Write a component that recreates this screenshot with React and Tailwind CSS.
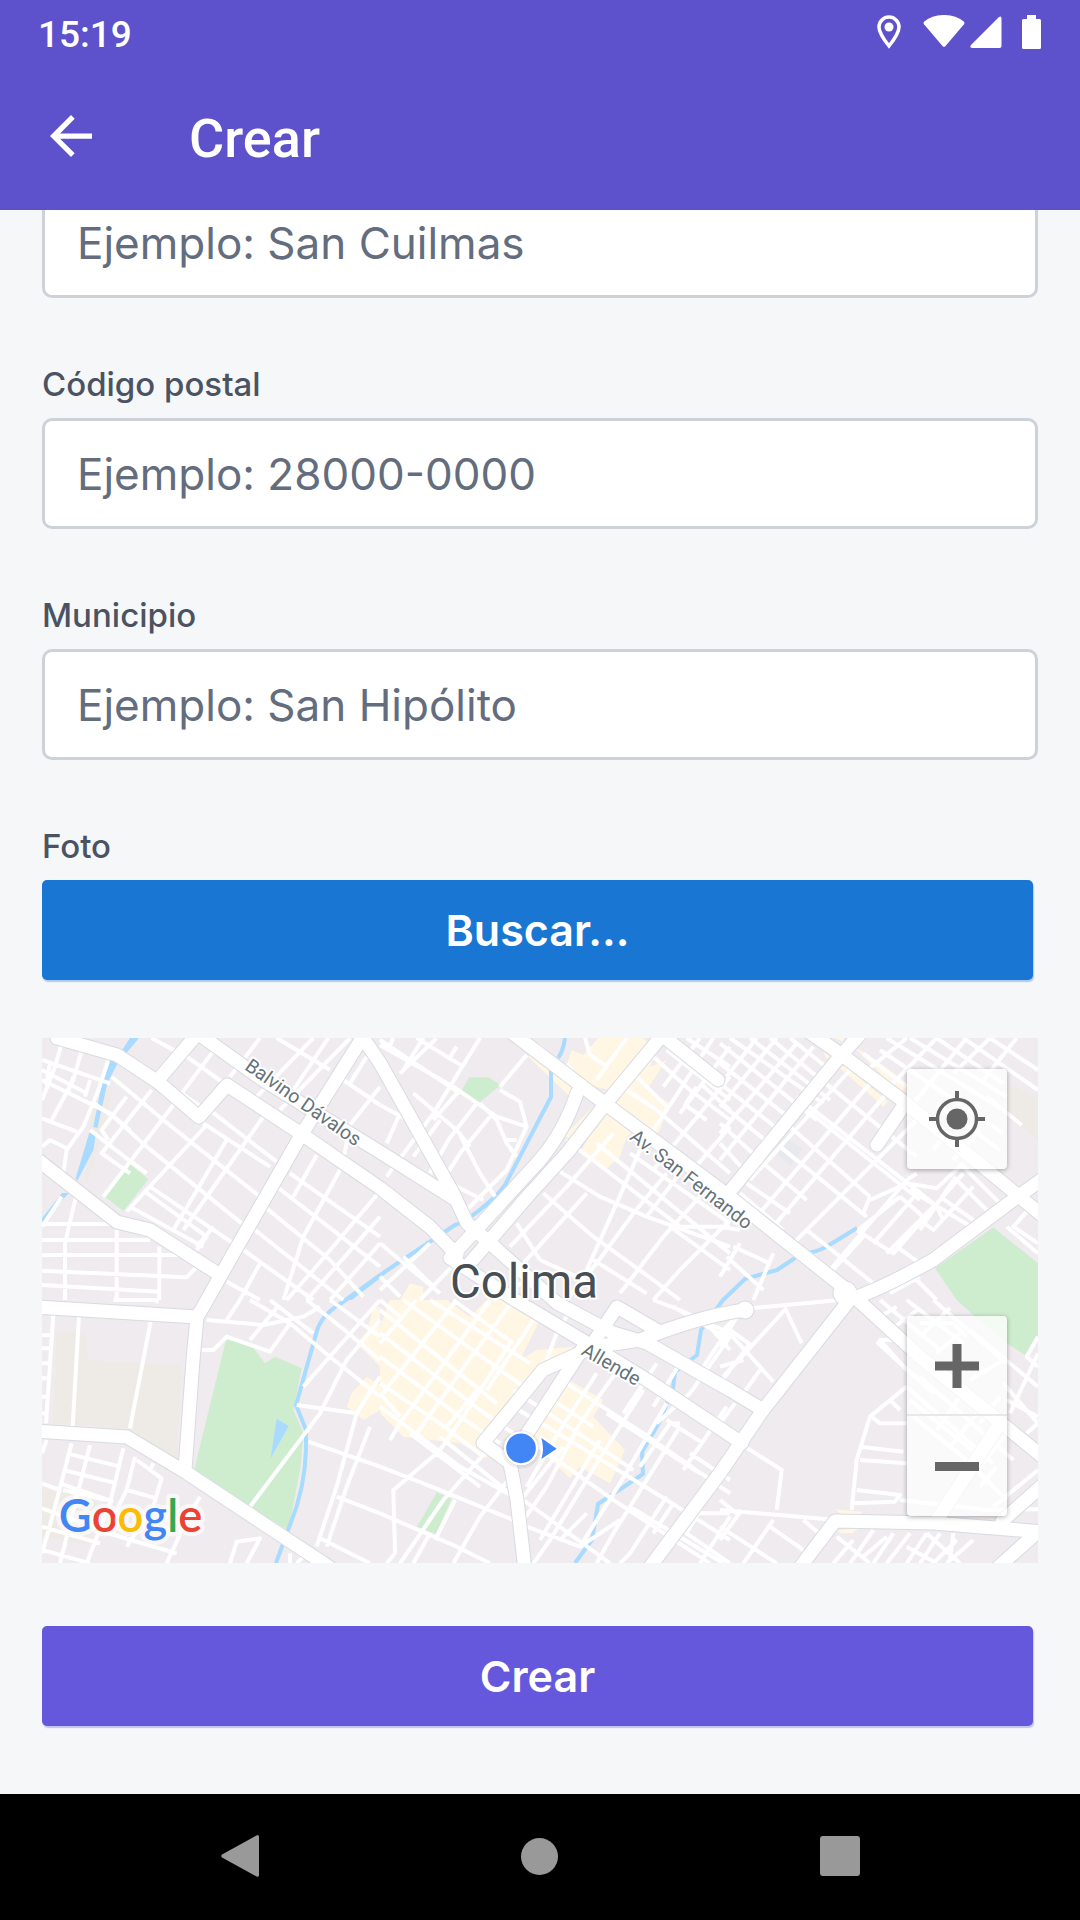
import React from "react";

const FONT = "font-[Inter,'Liberation_Sans',sans-serif]";

/* Map artwork is drawn in tiles; each tile has its own origin. */
const tiles = [
  {
    at: "translate(-36 -24)",
    blocks: "",
    sand: "M215 170L245 185L205 360L165 470L175 300Z",
    parks: "M300 403L355 448L280 543L222 498Z",
    rivers:
      "M300 24L327 24L290 68L275 62ZM240 86L268 90L232 160L202 295L190 290L218 150ZM178 308L198 310L190 360L142 452L137 445ZM95 490L118 488L72 535L36 590V565ZM940 810L1050 728V745L965 810Z",
    streets:
      "M100 24L75 110L36 210M158 50L130 150L65 270M36 90L240 160M36 150L240 250L300 300M36 120L170 190M60 100L48 165M130 140L115 185M180 150L165 200M235 90L205 180L160 290L110 360L100 430M36 265L140 305M36 350L60 330L110 355M245 140L400 270L500 350L690 500M365 24L440 65M290 200L215 300L235 330M365 180L215 370L300 430M430 225L220 500M530 285L290 545M590 330L430 600M700 260L460 600M185 215L250 260L350 350L635 580M180 300L290 385L350 430M545 245L740 395M520 280L720 410M470 80L590 165M560 50L455 190L520 235M690 24L600 140M740 24L900 120M850 24L680 200M790 180L895 24M960 24L750 240M345 485L530 620L500 660M300 530L520 650M360 470L610 640M550 590L500 650M36 582H245M36 630H360M36 675H450M36 722L470 742L510 700M36 765L385 785M140 490L105 640V810M95 500L36 590M260 600V810M388 650V810M860 375L790 500M930 420L820 620L760 810M1040 495L850 720L770 810M780 430L1050 620M740 470L1050 710M710 535L900 690L1000 800M675 600L940 810M640 660L850 810M590 755L690 810M690 700L630 810M940 150L1050 225M1050 170L960 285L940 390M1010 80L960 160M1050 560L830 810M1050 640L900 810",
  },
  {
    at: "translate(1014 -24)",
    blocks:
      "M445 80L480 40L600 150L575 205ZM575 60L610 75L655 24H790L830 60L810 110L860 90L800 180L870 220L835 310L780 290L740 320L720 380L675 420L600 370L620 330L550 320L650 220L690 180L600 160L560 105ZM90 760L130 770V810H60Z",
    sand: "",
    parks: "M268 142H325L362 165L290 224L240 188Z",
    rivers: "",
    streets:
      "M0 45L220 170L350 260L440 290M40 24L24 60M110 24L250 110M170 24L60 130M300 24L160 250L20 440M230 50L205 90M130 24L70 120M0 225L120 290M60 250L20 340M0 30L240 190M440 75L360 170M235 185L160 270M290 220L205 330L150 430M330 260L240 370L190 450M360 180L420 215L440 290L380 420L260 540M300 220L350 270L380 340L410 380M240 315L300 430L345 500M375 330H410M100 190L230 300L270 350M180 270L100 380M190 450L310 510M615 24L630 75L680 110M740 24L650 150M560 100L590 140M820 80L930 180L1050 270M860 60L1050 210M1000 24L880 210L800 330M1050 50L900 250M1050 140L820 420M960 24L850 170M920 24L1050 110M740 180L830 240L1050 430M770 140L860 230M960 160L1050 240M950 170L915 225L980 270M1050 290L930 430M750 370L1050 580M650 340L1050 670M560 330L900 590H1050M540 425L660 500L800 560L1050 650M490 490L640 620L820 750L900 810M780 360L710 520L620 720M860 430L760 550L650 700L560 810M960 500L850 620L720 790M1050 570L900 720L820 810M700 310L560 470L390 650M620 490L430 700M410 580L480 690M480 690L590 740M640 690L800 790M870 590L1050 720M440 750L340 810M0 640L180 790M0 740L60 800M150 640L0 780M225 700L120 810M70 680L160 770M800 560L900 430",
  },
  {
    at: "translate(2034 -24)",
    blocks:
      "M355 110L375 108L505 215L490 230ZM405 55L420 60L515 125L560 160V190L500 150ZM345 24H370V35ZM310 65L330 78L320 88ZM425 24H440L430 40Z",
    sand: "M860 160L954 205V330L860 260Z",
    parks: "M820 592L954 700V810H710L645 715Z",
    rivers: "",
    streets:
      "M0 40L290 270M0 100L210 265M0 160L190 310M0 220L160 350M0 280L120 390M0 340L90 440M30 24L310 220M90 24L330 210M150 24L340 180M210 24L330 120M0 230L170 24M0 310L230 40M0 390L280 50M20 140L110 24M90 450L390 120M110 560L450 160M160 590L500 190M220 640L560 300L590 270M330 720L560 450M280 130L590 380M230 200L640 520M260 240L600 510M210 290L450 500M180 350L440 560M130 400L260 510M80 460L210 550M60 490L190 600M450 510L560 460L650 475L730 400M560 450L590 430M570 480L770 600M540 500L610 560M540 500L415 600M600 480L460 640M650 520L500 670M700 450L600 600M730 430L520 670L410 600M430 550L450 500M760 470L640 600L600 570M660 500L760 570M700 440L800 540M720 400L840 520M610 560L650 530L670 570M260 600L460 760M230 640L320 710M430 620L320 740M530 650L600 700M500 24L850 240M570 24L860 200M650 24L850 160M730 24L954 180M810 24L954 120M560 24L430 130M650 24L500 180M740 24L580 220M810 24L700 130M890 24L790 150M480 60L850 310M430 70L560 170M600 260L740 350M650 220L840 360M800 200L905 285M710 260L640 360M780 300L700 390M860 590L954 670M920 545L880 590L954 640M0 740L60 640M20 680L130 780M40 650L150 700M160 670L100 810M0 590L60 600M590 750L650 810M510 790L600 740",
  },
  {
    at: "translate(-36 786)",
    blocks:
      "M1030 24L1050 20V200L980 130L1010 95ZM965 280L1010 230L1050 255V330L1000 360L950 320Z",
    sand: "M80 95L165 100L175 180L455 195L440 480L295 385L70 370ZM36 565L90 580L120 560L200 580V630L170 735L36 710Z",
    parks: "M588 120L662 132L705 190L735 170L815 205L790 330L820 400L812 500L775 690L530 545L490 520Z",
    rivers: "M740 356L776 378L722 475Z",
    streets:
      "M36 105H60M36 145H60M36 190H55M36 235H50M36 290H50M36 340H50M70 45L48 370M147 45L128 380M362 65L300 385M250 0H380V10M530 60L700 75L820 50L870 20M515 150H550L590 110L720 155L780 70M630 0L590 60M740 24L660 120M660 0L780 70L900 170L1050 290M720 0L850 100M830 0L950 95L1050 180M900 0L1050 110M1050 60L950 180L870 340L660 620M1050 0L820 260M800 315L980 340L1050 230M980 340L920 560L860 740M1020 380L950 560L890 740M835 425L1050 500M920 590L1050 640M870 715L1020 790M125 430L70 640L36 760M180 435L90 790M280 445L240 610L170 790M315 470L290 570L250 650M110 460L270 500M100 510L260 550M90 550L250 605M36 550L90 570M36 625L300 720M36 680L210 730M36 750L180 790M50 420L36 460M100 570L230 600M320 480L395 535L370 620L290 740M290 570L380 595M200 690L440 760M510 590L470 660L410 790M600 790L620 725L690 715L650 790M780 760V790M820 770L800 790M370 490L360 510",
  },
  {
    at: "translate(1014 786)",
    blocks:
      "M30 0H200L270 50L320 0H400L480 60L420 180L470 150L580 140L350 400L320 475L240 430L70 410L0 340V80ZM550 230L670 300L640 350L735 450L690 550L600 500L570 535L460 430L430 380Z",
    sand: "",
    parks: "M170 577L215 597L168 702L112 680Z",
    rivers: "",
    streets:
      "M0 100L300 330L400 400M0 30L350 310M70 0L430 260M150 0L450 190M220 0L400 130M0 170L240 350L360 430M0 250L180 370L310 470M0 320L240 500L400 590M0 0L60 50M110 0L0 130M230 0L0 290M330 0L60 370L30 420M400 0L260 190L110 400M390 130L250 350L180 450M460 60L320 270M300 260L200 380M340 430L190 600L60 790M400 520L300 650L220 790M0 500L130 550L400 660M0 640L230 740L330 790M170 460L40 570L45 760L20 790M90 400L300 560M150 700L100 790M180 410L390 580M225 600L165 720M400 270L550 370L760 510M400 320L600 440L860 600L1050 720M420 400L700 600L990 790M430 600L690 790M440 680L600 740L720 660M620 640L540 720M560 250L790 400L1050 580M500 290L640 380M680 340L820 430L960 520M720 200L600 370L500 560L410 690M790 270L650 490L510 720L460 790M860 310L720 550L600 740M830 190L730 340M650 220L540 390L440 560M550 440L430 590M900 380L700 700L650 790M1040 320L910 510M900 370L870 370L780 500M660 420L480 720M860 360L970 430M930 460L1050 540M860 590L750 760L720 790M880 610L820 700M960 640H1050M960 630L920 700L1050 790M750 620L1030 790M1050 650L960 790M530 100L500 180M560 50L530 100M740 90L690 170M880 20L1050 120M820 0L900 30L1050 100M1050 80L970 200M1050 110L930 280L830 370M900 190L820 320M980 70L1050 150M0 280L60 350",
  },
  {
    at: "translate(2034 786)",
    blocks: "M345 628L425 635L420 645L360 640ZM355 690L415 685L400 700H360Z",
    sand: "",
    parks: "M710 0H954V110L915 165L860 130L760 45Z",
    rivers: "",
    streets:
      "M100 24L360 0M200 24L10 230M195 24L245 130M0 100L50 50L0 140M20 90L160 245M0 200L70 180M120 210L70 280M90 130L0 250M45 310L0 370M30 90L100 140M75 440L185 510L170 630M0 600L50 640M0 630L350 660M65 630L0 720M0 680L170 790M160 660L70 790M150 680L250 750M250 660L310 710M560 120L480 120L560 210M470 125L640 280M560 260L450 350L410 480L395 630M510 300L540 330M455 350L480 370H560M420 440L550 455M420 480L560 490M410 570L540 585L525 605L400 610M540 600L800 630L954 628M480 0L660 150M560 0L730 130M640 0L860 190M530 20L480 50M600 24L510 90M690 24L600 110M730 90L650 160M600 70H700L740 110M750 90L954 260M850 180L750 240M954 110L920 170L954 200M954 160L870 340M850 250L954 370L920 400M954 350L860 300M840 290L780 370M600 230L880 480M560 260L820 490M570 300L780 470M580 350L740 480M550 200L690 310M720 290L650 390M780 330L690 440M860 400L730 560M740 480L860 600M830 500L780 560M820 620L954 510M350 710L450 790M400 720L340 790M460 690L390 790M520 700L460 790M570 700L500 790M620 700L560 790M430 770L500 710M660 700L600 790M620 700L720 790M700 700L690 780M710 720L640 790M760 720L680 790M560 740L650 790",
  },
];

const rivers =
  "M565 1038Q563 1052 558 1058M551 1070V1097L505 1185L497 1195Q470 1220 455 1225L386 1271L340 1304Q320 1316 316 1334L296 1405L306 1430V1450Q305 1490 288 1530L276 1563M857 1228L826 1247Q812 1254 804 1252L777 1270L745 1279L723 1300L701 1330L697 1355L675 1372L673 1388L660 1421L642 1452L643 1474L598 1504L592 1540L575 1563";

const roads = [
  "M57 1038L117 1055L158 1082L199 1117L227 1085L303 1135L380 1188L430 1227L457 1255",
  "M199 1032L158 1080M200 1035L263 1080L380 1152L453 1198",
  "M366 1032L300 1137L237 1247L203 1307L197 1317L193 1360L185 1470",
  "M359 1032L380 1063L453 1193L467 1223L490 1243L557 1303L613 1333L647 1343L730 1390L763 1410",
  "M38 1160L117 1222L150 1230L217 1273",
  "M36 1307L197 1317",
  "M36 1431L127 1437L187 1473L323 1563L340 1575",
  "M511 1032L587 1090L730 1197L847 1290L920 1357L1038 1453L1044 1458",
  "M665 1032L607 1102L567 1153L527 1197L470 1263",
  "M577 1093Q565 1130 540 1160L497 1207L450 1258L515 1300L587 1343L647 1380L742 1443",
  "M658 1032L718 1080",
  "M809 1032L842 1055L902 1100L1020 1197L1044 1217",
  "M862 1032L837 1060L727 1195",
  "M902 1108L877 1145",
  "M1044 1178L1013 1200L933 1260Q880 1290 848 1300",
  "M848 1302L763 1410L720 1473L653 1563L648 1570",
  "M745 1310Q700 1316 640 1340L593 1347L543 1370L483 1443L510 1463L517 1500L525 1570",
  "M585 1345L523 1440",
  "M593 1343L617 1307L660 1332",
  "M798 1570L835 1521L933 1523L1044 1532",
  "M937 1520L999 1425",
  "M1044 1484L1002 1521M1034 1535L995 1570",
];

function CityMap() {
  return (
    <svg
      className="block h-[525px] w-full bg-[#efebef]"
      viewBox="0 0 2988 1575"
      preserveAspectRatio="xMidYMid slice"
      role="img"
      aria-label="Colima"
    >
      <rect width="2988" height="1575" fill="#efebef" />
      {tiles.map((t) => (
        <g key={t.at} transform={t.at}>
          <path d={t.blocks} fill="#fff6e3" />
          <path d={t.sand} fill="#eeebe7" />
          <path d={t.parks} fill="#ceedcf" />
        </g>
      ))}
      <path transform="translate(2034 -24)" d="M195 318L248 358L212 405L160 362Z" fill="#e6eaef" />
      <g transform="scale(3) translate(-42 -1038)">
        <path d={rivers} fill="none" stroke="#a9daff" strokeWidth="4" strokeLinejoin="round" />
      </g>
      {tiles.map((t) => (
        <g key={t.at} transform={t.at}>
          <path d={t.rivers} fill="#a9daff" />
          <path d={t.streets} fill="none" stroke="#ffffff" strokeWidth="12" strokeLinejoin="round" />
        </g>
      ))}
      <g transform="scale(3) translate(-42 -1038)" fill="none" strokeLinejoin="round" strokeLinecap="round">
        <g stroke="#d8dbe0" strokeWidth="15">
          {roads.map((d) => (
            <path key={d} d={d} />
          ))}
          <circle cx="745" cy="1310" r="2" />
          <circle cx="845" cy="1293" r="5" />
        </g>
        <g stroke="#ffffff" strokeWidth="13">
          {roads.map((d) => (
            <path key={d} d={d} />
          ))}
          <circle cx="745" cy="1310" r="2" />
          <circle cx="845" cy="1293" r="5" />
        </g>
      </g>
      <g
        className="font-[Roboto,'Liberation_Sans',sans-serif]"
        fill="#65727a"
        stroke="#ffffff"
        strokeWidth="12"
        strokeLinejoin="round"
        paintOrder="stroke"
        fontSize="58"
      >
        <text transform="translate(605 92) rotate(35)">Balvino Dávalos</text>
        <text transform="translate(1760 302) rotate(38)">Av. San Fernando</text>
        <text transform="translate(1615 948) rotate(30)">Allende</text>
        <text x="1224" y="779" fontSize="142" fill="#484e53">
          Colima
        </text>
      </g>
      <g transform="translate(1014 786)">
        <circle cx="423" cy="448" r="58" fill="#000000" opacity=".06" />
        <circle cx="423" cy="446" r="52" fill="#000000" opacity=".12" />
        <path d="M484 414L530 446L484 477Q494 446 484 414Z" fill="#4285f4" stroke="#ffffff" strokeWidth="12" paintOrder="stroke" strokeLinejoin="round" />
        <circle cx="423" cy="445" r="48" fill="#4285f4" stroke="#ffffff" strokeWidth="7" />
      </g>
      <text
        x="50"
        y="1482"
        fontSize="136"
        className="font-[Lato,sans-serif] font-semibold"
        stroke="#ffffff"
        strokeOpacity=".65"
        strokeWidth="26"
        strokeLinejoin="round"
        paintOrder="stroke"
      >
        <tspan fill="#4285f4">G</tspan>
        <tspan fill="#ea4335">o</tspan>
        <tspan fill="#fbbc04">o</tspan>
        <tspan fill="#4285f4">g</tspan>
        <tspan fill="#34a853">l</tspan>
        <tspan fill="#ea4335">e</tspan>
      </text>
    </svg>
  );
}

const labelStyle = "mb-[18px] text-[33px] leading-8 font-medium text-[#4b5362]";

function Field({ id, label, placeholder }) {
  return (
    <div className="mb-[70px] flex flex-col">
      {label && (
        <label htmlFor={id} className={labelStyle}>
          {label}
        </label>
      )}
      <input
        id={id}
        type="text"
        aria-label={label ? undefined : placeholder}
        placeholder={placeholder}
        className="h-[111px] w-full rounded-[10px] border-3 border-[#cdd2d9] bg-white px-8 text-[44px] text-[#636d7e] placeholder:text-[#636d7e]"
      />
    </div>
  );
}

function StatusBar() {
  return (
    <div className="flex h-16 items-center justify-between pr-[39px] pl-[38px] text-[37px] leading-none font-medium">
      <span className="pt-1">15:19</span>
      <div className="flex items-center" aria-hidden="true">
        <svg className="mr-[22px] h-[34px] w-6" viewBox="0 0 24 34" fill="none">
          <path d="M12 2C6.500 2 2 6.500 2 12c0 6.500 10 19 10 19s10-12.500 10-19C22 6.500 17.500 2 12 2z" stroke="white" strokeWidth="3.500" />
          <circle cx="12" cy="12" r="4.500" fill="white" />
        </svg>
        <svg className="mr-[5px] h-[34px] w-[42px]" viewBox="0 0 42 34" fill="white">
          <path d="M1.200 6.500C12-2.200 30-2.200 40.800 6.500Q42 7.800 41 9.200L22.300 31.200Q21 32.500 19.700 31.200L1 9.200Q0 7.800 1.200 6.500Z" />
        </svg>
        <svg className="mr-5 h-[34px] w-8" viewBox="0 0 32 34" fill="white">
          <path d="M28.500 2.500Q31.500 0 31.500 4V31Q31.500 33 29.500 33H2Q-.8 32.500 1 30Z" />
        </svg>
        <svg className="h-[34px] w-[19px]" viewBox="0 0 19 34" fill="white">
          <path d="M5 0H14V4H17.500Q19 4 19 5.500V32.500Q19 34 17.500 34H1.500Q0 34 0 32.500V5.500Q0 4 1.500 4H5Z" />
        </svg>
      </div>
    </div>
  );
}

const mapButton = "flex size-[100px] items-center justify-center bg-white/75 text-[#666666]";
const action =
  "mr-[5px] flex h-[100px] items-center justify-center rounded-[5px] text-[43px] font-semibold text-white";

export default function App() {
  return (
    <div className={`flex min-h-screen flex-col bg-[#f5f7f9] ${FONT}`}>
      <header className="relative z-10 h-[210px] bg-[#5e52cc] font-[Roboto,'Liberation_Sans',sans-serif] text-white">
        <StatusBar />
        <div className="flex h-36 items-center px-[50px]">
          <button type="button" aria-label="Volver" className="mr-[97px]">
            <svg className="size-[42px]" viewBox="4 4 16 16" fill="white">
              <path d="M20 11H7.830l5.590-5.590L12 4l-8 8 8 8 1.410-1.410L7.830 13H20v-2z" />
            </svg>
          </button>
          <h1 className="pt-1.5 text-[54px] leading-none font-medium">Crear</h1>
        </div>
      </header>

      <main className="flex-1 px-[42px]">
        <form className="-mt-[23px] flex flex-col" onSubmit={(e) => e.preventDefault()}>
          <Field id="colonia" placeholder="Ejemplo: San Cuilmas" />
          <Field id="cp" label="Código postal" placeholder="Ejemplo: 28000-0000" />
          <Field id="municipio" label="Municipio" placeholder="Ejemplo: San Hipólito" />
          <label htmlFor="foto" className={labelStyle}>
            Foto
          </label>
          <button id="foto" type="button" className={`${action} mb-[58px] bg-[#1976d2] shadow-[1px_2px_1px_#1976d255]`}>
            Buscar...
          </button>
          <div className="relative mb-[63px]">
            <CityMap />
            <button
              type="button"
              aria-label="Mi ubicación"
              className={`${mapButton} absolute top-[31px] right-[31px] rounded-[4px] shadow-[0_1px_5px_#00000055]`}
            >
              <svg className="size-14" viewBox="0 0 56 56" fill="none" stroke="currentColor">
                <circle cx="28" cy="28" r="19.500" strokeWidth="3.500" />
                <circle cx="28" cy="28" r="10.500" fill="currentColor" stroke="none" />
                <path d="M28 0V8M28 48V56M0 28H8M48 28H56" strokeWidth="4" />
              </svg>
            </button>
            <div className="absolute top-[278px] right-[31px] flex flex-col rounded-[4px] shadow-[0_1px_5px_#00000055]">
              <button type="button" aria-label="Acercar" className={`${mapButton} rounded-t-[4px]`}>
                <svg className="size-11" viewBox="0 0 44 44" fill="currentColor">
                  <path d="M17.500 0h9v17.500H44v9H26.500V44h-9V26.500H0v-9h17.500z" />
                </svg>
              </button>
              <button
                type="button"
                aria-label="Alejar"
                className={`${mapButton} rounded-b-[4px] shadow-[0_-2px_0_#e8e8e8]`}
              >
                <svg className="h-[9px] w-11" viewBox="0 0 44 9" fill="currentColor">
                  <path d="M0 0H44V9H0Z" />
                </svg>
              </button>
            </div>
          </div>
          <button type="submit" className={`${action} mb-[68px] bg-[#6558dc] shadow-[1px_2px_1px_#6558dc55]`}>
            Crear
          </button>
        </form>
      </main>

      <nav className="flex h-[126px] items-center justify-center gap-[262px] bg-black pb-0.5 text-[#999999]">
        <button type="button" aria-label="Atrás">
          <svg className="h-[42px] w-[38px]" viewBox="0 0 38 42" fill="currentColor">
            <path d="M35.500 .4Q38 -.6 38 2V40Q38 42.600 35.500 41.500L1 22.500Q-.5 21 1 19.500Z" />
          </svg>
        </button>
        <button type="button" aria-label="Inicio" className="size-[37px] rounded-full bg-[#999999]" />
        <button type="button" aria-label="Recientes" className="size-10 rounded-[3px] bg-[#999999]" />
      </nav>
    </div>
  );
}
